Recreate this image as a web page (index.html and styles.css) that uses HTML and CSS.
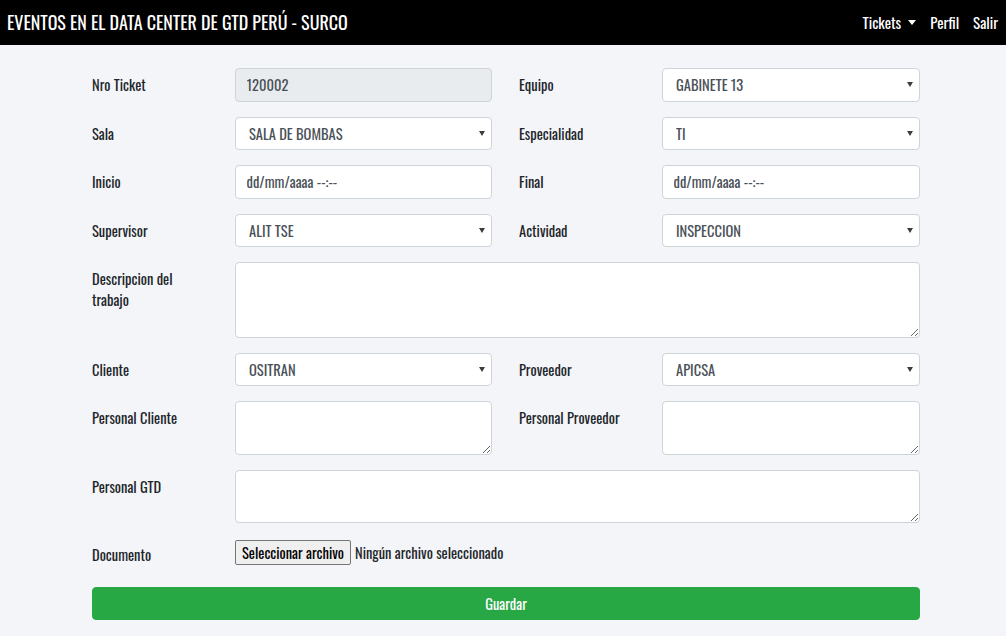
FILE: index.html
```html
<!DOCTYPE html>
<html lang="es">
<head>
<meta charset="utf-8">
<title>Eventos</title>
<link rel="stylesheet" href="styles.css">
</head>
<body>
<nav class="navbar">
  <span class="brand">EVENTOS EN EL DATA CENTER DE GTD PERÚ - SURCO</span>
  <ul class="nav">
    <li class="nav-item">Tickets <span class="caret"></span></li>
    <li class="nav-item">Perfil</li>
    <li class="nav-item">Salir</li>
  </ul>
</nav>
<main class="page">
  <form class="form">
    <label class="lbl c1">Nro Ticket</label>
    <input class="ctl ro c2" type="text" value="120002" readonly>
    <label class="lbl c4">Equipo</label>
    <div class="sel c5"><select class="ctl"><option>GABINETE 13</option></select></div>

    <label class="lbl c1">Sala</label>
    <div class="sel c2"><select class="ctl"><option>SALA DE BOMBAS</option></select></div>
    <label class="lbl c4">Especialidad</label>
    <div class="sel c5"><select class="ctl"><option>TI</option></select></div>

    <label class="lbl c1">Inicio</label>
    <input class="ctl c2" type="text" value="dd/mm/aaaa --:--">
    <label class="lbl c4">Final</label>
    <input class="ctl c5" type="text" value="dd/mm/aaaa --:--">

    <label class="lbl c1">Supervisor</label>
    <div class="sel c2"><select class="ctl"><option>ALIT TSE</option></select></div>
    <label class="lbl c4">Actividad</label>
    <div class="sel c5"><select class="ctl"><option>INSPECCION</option></select></div>

    <label class="lbl c1 wrap">Descripcion del trabajo</label>
    <textarea class="ctl area3 wide"></textarea>

    <label class="lbl c1">Cliente</label>
    <div class="sel c2"><select class="ctl"><option>OSITRAN</option></select></div>
    <label class="lbl c4">Proveedor</label>
    <div class="sel c5"><select class="ctl"><option>APICSA</option></select></div>

    <label class="lbl c1">Personal Cliente</label>
    <textarea class="ctl area2 c2"></textarea>
    <label class="lbl c4">Personal Proveedor</label>
    <textarea class="ctl area2 c5"></textarea>

    <label class="lbl c1">Personal GTD</label>
    <textarea class="ctl area2 wide"></textarea>

    <label class="lbl c1">Documento</label>
    <div class="file wide">
      <button type="button" class="file-btn">Seleccionar archivo</button>
      <span class="file-name">Ningún archivo seleccionado</span>
    </div>

    <button type="button" class="btn-save full">Guardar</button>
  </form>
</main>
</body>
</html>
```

FILE: styles.css
```css
* { box-sizing: border-box; }
html, body { margin: 0; padding: 0; }
body {
  background: #f4f5f9;
  font-family: "Oswald", "Liberation Sans Narrow", "DejaVu Sans Condensed", "Liberation Sans", sans-serif;
  font-size: 14.5px;
  line-height: 1.5;
  color: #212529;
}
.navbar {
  height: 45px;
  background: #000;
  color: #fff;
  display: flex;
  align-items: center;
  justify-content: space-between;
  padding: 0 8px 0 7px;
}
.brand {
  font-size: 18px;
  white-space: nowrap;
}
.nav {
  list-style: none;
  margin: 0;
  padding: 0;
  display: flex;
  gap: 14px;
  font-size: 15px;
}
.nav-item { display: flex; align-items: center; }
.caret {
  display: inline-block;
  width: 0; height: 0;
  margin-left: 7px;
  border-left: 4px solid transparent;
  border-right: 4px solid transparent;
  border-top: 5px solid #fff;
}
.page { padding: 23px 0 20px 92px; }
.form {
  display: grid;
  grid-template-columns: 143px 257px 27px 143px 258px;
  row-gap: 15px;
  width: 828px;
}
.c1 { grid-column: 1; }
.c2 { grid-column: 2; }
.c4 { grid-column: 4; }
.c5 { grid-column: 5; }
.wide { grid-column: 2 / 6; }
.full { grid-column: 1 / 6; }
.lbl {
  padding: 6px 0;
  margin: 0;
  line-height: 21px;
  color: #212529;
  align-self: start;
}
.wrap { padding-right: 30px; }
.ctl {
  display: block;
  width: 100%;
  height: 33.5px;
  padding: 5px 10.5px;
  font-family: inherit;
  font-size: 14.5px;
  line-height: 21px;
  color: #495057;
  background: #fff;
  border: 1px solid #ced4da;
  border-radius: 4px;
  margin: 0;
}
.sel { position: relative; }
.sel select.ctl {
  -webkit-appearance: none;
  appearance: none;
  padding-left: 13px;
  padding-right: 24px;
}
.sel::after {
  content: "";
  position: absolute;
  right: 7px;
  top: 14px;
  width: 0; height: 0;
  border-left: 3px solid transparent;
  border-right: 3px solid transparent;
  border-top: 5px solid #3c3c3c;
  pointer-events: none;
}
.ro { background: #e9ecef; }
textarea.ctl { resize: vertical; }
.area3 { height: 75.5px; }
.area2 { height: 53.5px; }
.file {
  display: flex;
  align-items: center;
  gap: 4px;
  padding-top: 2px;
  align-self: start;
}
.file-btn {
  font-family: inherit;
  font-size: 14.5px;
  color: #000;
  height: 25px;
  padding: 0 6px;
  background: #efefef;
  border: 1px solid #767676;
  border-radius: 2px;
}
.file-name { color: #212529; }
.btn-save {
  height: 32.5px;
  margin-top: 1px;
  background: #28a745;
  color: #fff;
  border: 1px solid #28a745;
  border-radius: 4px;
  font-family: inherit;
  font-size: 14.5px;
}
```
